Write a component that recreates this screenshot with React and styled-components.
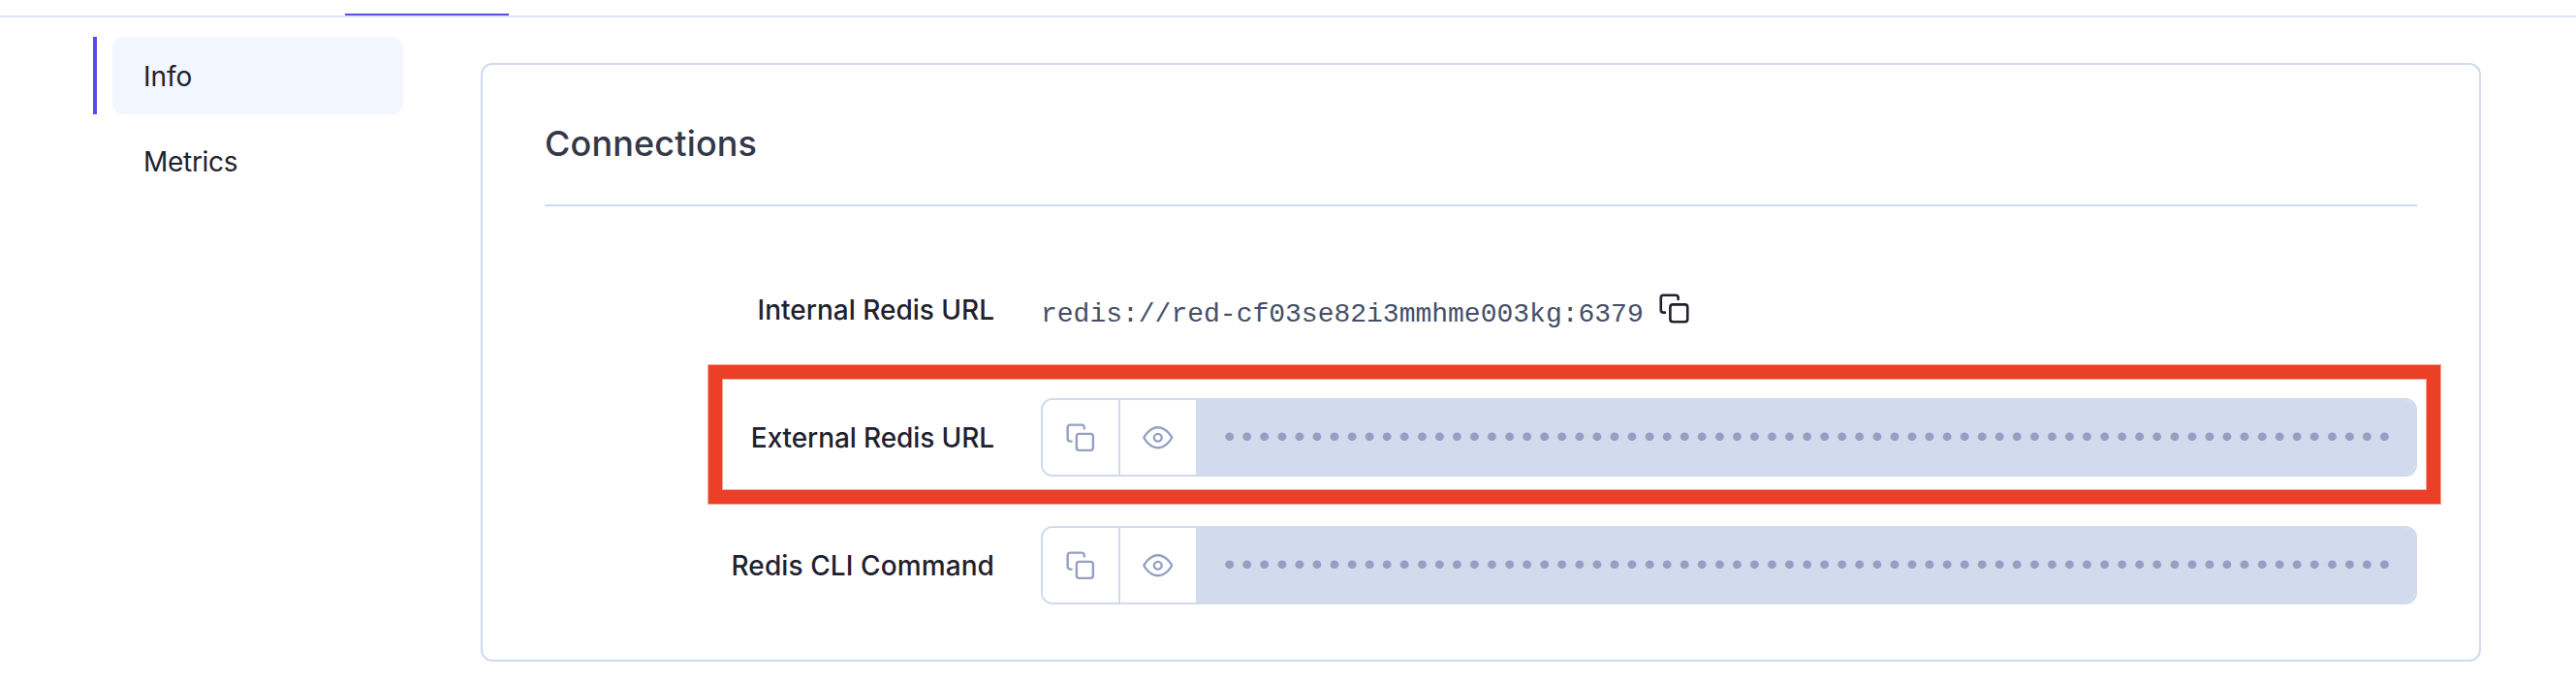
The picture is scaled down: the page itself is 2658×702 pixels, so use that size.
import React from 'react';
import styled, { createGlobalStyle } from 'styled-components';

const GlobalStyle = createGlobalStyle`
  *, *::before, *::after { box-sizing: border-box; }
  body {
    margin: 0;
    background: #fff;
    color: #1f222e;
    font-family: Inter, "Liberation Sans", sans-serif;
    font-size: 28px;
  }
`;

const Page = styled.div`
  height: 702px;
  overflow: hidden;
`;

const TabBar = styled.header`
  display: flex;
  align-items: flex-end;
  height: 18px;
  padding-left: 356px;
  border-bottom: 2px solid #dde7f6;
`;

const ActiveTab = styled.div`
  width: 169px;
  height: 2px;
  background: #574fe0;
`;

const Body = styled.div`
  display: flex;
  align-items: flex-start;
  gap: 80px;
  padding: 0 98px 0 96px;
`;

const SideNav = styled.nav`
  display: flex;
  flex-direction: column;
  gap: 8px;
  width: 320px;
  padding-top: 20px;
`;

const NavItem = styled.div`
  display: flex;
  gap: 16px;
  height: 80px;

  &::before {
    content: '';
    width: 4px;
    background: ${(p) => (p.$active ? '#574fe0' : 'transparent')};
  }
`;

const NavLabel = styled.a`
  display: flex;
  align-items: center;
  flex: 1;
  padding: 1px 0 0 32px;
  border-radius: 12px;
  letter-spacing: ${(p) => p.$tracking};
  background: ${(p) => (p.$active ? '#f1f6ff' : 'transparent')};
`;

const Card = styled.section`
  flex: 1;
  height: 618px;
  margin-top: 47px;
  padding: 0 64px;
  border: 2px solid #d0daee;
  border-radius: 12px;
`;

const CardHeader = styled.div`
  height: 146px;
  padding-top: 59px;
  border-bottom: 2px solid #d0daee;
`;

const Title = styled.h2`
  margin: 0;
  color: #343848;
  font-size: 36px;
  font-weight: 500;
  line-height: 44px;
  letter-spacing: 0.15px;
`;

const Rows = styled.div`
  display: flex;
  flex-direction: column;
  gap: 51px;
  padding-top: 66px;
`;

const Row = styled.div`
  position: relative;
  display: flex;
  align-items: center;
  gap: 48px;
  height: 81px;
`;

const Label = styled.div`
  width: 464px;
  font-weight: 500;
  text-align: right;
  white-space: nowrap;
  letter-spacing: ${(p) => p.$tracking};
`;

const Plain = styled.div`
  display: flex;
  align-items: center;
  gap: 15px;
  color: #454f68;
  font-family: "Liberation Mono", monospace;
  font-size: 28px;
  line-height: 32px;

  svg {
    margin-bottom: 2px;
  }
`;

const PlainText = styled.span`
  padding-top: 10px;
`;

const Secret = styled.div`
  display: flex;
  flex: 1;
  height: 81px;
  border: 2px solid #d0daee;
  border-radius: 12px;
  overflow: hidden;
`;

const IconButton = styled.button`
  display: flex;
  align-items: center;
  justify-content: center;
  width: ${(p) => (p.$divided ? 80 : 78)}px;
  padding: 1px 0 0;
  border: 0;
  border-right: ${(p) => (p.$divided ? '2px solid #d0daee' : '0')};
  background: #fff;
  color: #959fc2;
`;

const Masked = styled.div`
  flex: 1;
  padding: 1px 0 0 25px;
  background: #d2daed;
  color: #959fc2;
  font-family: "Liberation Mono", monospace;
  font-size: 32px;
  line-height: 77px;
  letter-spacing: -1.145px;
  white-space: nowrap;
`;

const Highlight = styled.div`
  position: absolute;
  top: -34px;
  right: -24px;
  bottom: -28px;
  left: 169px;
  border: 14px solid #eb4027;
  box-shadow: 0 0 0 1px #f3a797, inset 0 0 0 1px #f3a797;
  pointer-events: none;
`;

const Svg = styled.svg`
  display: block;
  fill: none;
  stroke: ${(p) => p.$color || 'currentColor'};
  stroke-width: ${(p) => p.$weight || 1.8};
  stroke-linecap: round;
  stroke-linejoin: round;
`;

const CopyIcon = ({ size = 31.5, color, weight }) => (
  <Svg width={size} height={size} viewBox="0 0 24 24" $color={color} $weight={weight}>
    <rect x="9" y="9" width="13" height="13" rx="2" />
    <path d="M5 15H4a2 2 0 0 1-2-2V4a2 2 0 0 1 2-2h9a2 2 0 0 1 2 2v1" />
  </Svg>
);

const EyeIcon = () => (
  <Svg width={31.5} height={31.5} viewBox="0 0 24 24">
    <path d="M1 12s4-8 11-8 11 8 11 8-4 8-11 8-11-8-11-8z" />
    <circle cx="12" cy="12" r="3" />
  </Svg>
);

const MASK = '•'.repeat(67);

const SecretField = () => (
  <Secret>
    <IconButton $divided aria-label="Copy"><CopyIcon /></IconButton>
    <IconButton aria-label="Show"><EyeIcon /></IconButton>
    <Masked>{MASK}</Masked>
  </Secret>
);

export default function App() {
  return (
    <Page>
      <GlobalStyle />
      <TabBar><ActiveTab /></TabBar>
      <Body>
        <SideNav>
          <NavItem $active><NavLabel $active $tracking="0">Info</NavLabel></NavItem>
          <NavItem><NavLabel $tracking="-0.3px">Metrics</NavLabel></NavItem>
        </SideNav>
        <Card>
          <CardHeader><Title>Connections</Title></CardHeader>
          <Rows>
            <Row>
              <Label $tracking="0">Internal Redis URL</Label>
              <Plain>
                <PlainText>redis://red-cf03se82i3mmhme003kg:6379</PlainText>
                <CopyIcon size={33} color="#1f222e" weight={1.9} />
              </Plain>
            </Row>
            <Row>
              <Label $tracking="-0.1px">External Redis URL</Label>
              <SecretField />
              <Highlight />
            </Row>
            <Row>
              <Label $tracking="0.1px">Redis CLI Command</Label>
              <SecretField />
            </Row>
          </Rows>
        </Card>
      </Body>
    </Page>
  );
}
